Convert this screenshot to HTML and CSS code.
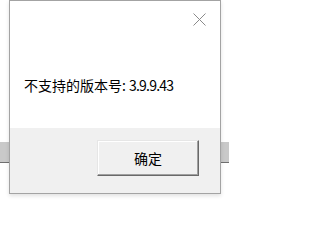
FILE: index.html
```html
<!DOCTYPE html>
<html lang="zh-CN">
<head>
<meta charset="utf-8">
<title>提示</title>
<link rel="stylesheet" href="styles.css">
</head>
<body>
<div class="stage">
  <div class="backdrop">
    <div class="band"></div>
  </div>
  <div class="dialog">
    <div class="content">
      <div class="titlebar">
        <span class="close" aria-label="关闭">
          <svg width="13" height="13" viewBox="0 0 13 13"><path d="M0.5 0.5 L12.5 12.5 M12.5 0.5 L0.5 12.5" stroke="#8a8a8a" stroke-width="1" fill="none"/></svg>
        </span>
      </div>
      <p class="message">不支持的版本号: <span class="ver">3.9.9.43</span></p>
    </div>
    <div class="footer">
      <button class="btn">确定</button>
    </div>
  </div>
</div>
</body>
</html>
```
FILE: styles.css
```css
html, body {
  margin: 0;
  padding: 0;
  background: #ffffff;
}
.stage {
  width: 229px;
  height: 202px;
  display: grid;
  overflow: hidden;
  font-family: "Noto Sans CJK SC", "Microsoft YaHei", sans-serif;
}
.backdrop, .dialog {
  grid-area: 1 / 1;
}
.backdrop {
  padding-top: 142px;
}
.band {
  height: 20px;
  background: #c9c9c9;
  border-bottom: 1px solid #6f6f6f;
}
.dialog {
  margin-left: 9px;
  width: 212px;
  height: 194px;
  box-sizing: border-box;
  border: 1px solid #a3a3a3;
  background: #ffffff;
  display: flex;
  flex-direction: column;
  box-shadow: 0 2px 4px rgba(0,0,0,0.12);
}
.content {
  height: 127px;
  background: #ffffff;
}
.titlebar {
  display: flex;
  justify-content: flex-end;
  padding: 12px 14px 0 0;
}
.close {
  display: block;
  width: 13px;
  height: 13px;
}
.close svg { display: block; }
.message {
  margin: 51px 0 0 14px;
  font-size: 14px;
  line-height: 16px;
  color: #000;
  white-space: nowrap;
}
.ver {
  letter-spacing: -0.8px;
}
.footer {
  flex: 1;
  background: #f0f0f0;
  display: flex;
  justify-content: flex-end;
  align-items: flex-start;
  padding: 12px 21px 0 0;
}
.btn {
  width: 102px;
  height: 36px;
  box-sizing: border-box;
  margin: 0;
  padding: 0;
  font-family: inherit;
  font-size: 14px;
  color: #000;
  background: #f0f0f0;
  border: 1px solid;
  border-color: #e6e6e6 #696969 #696969 #e6e6e6;
  box-shadow: inset -1px -1px 0 #a0a0a0, inset 1px 1px 0 #ffffff;
  border-radius: 0;
}
```
